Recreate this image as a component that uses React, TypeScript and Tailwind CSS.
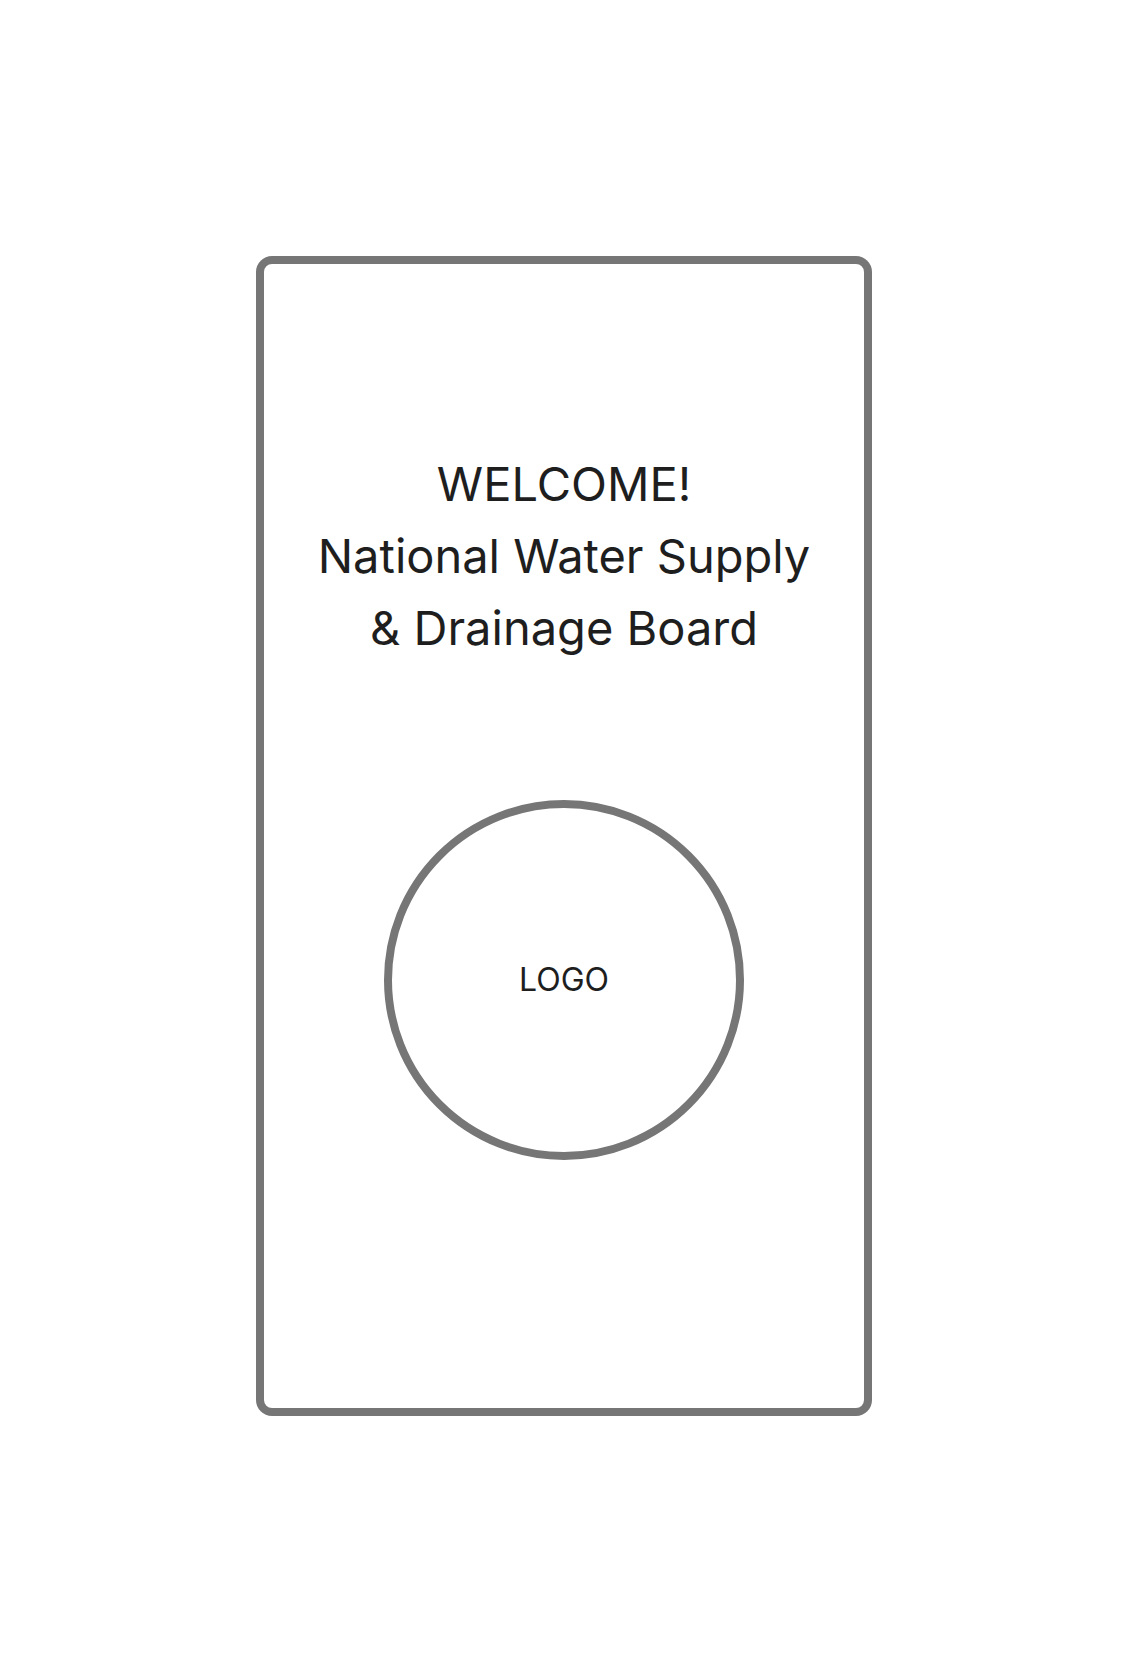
export default function App() {
  return (
    <div className="min-h-screen w-full bg-white flex items-center justify-center" style={{ fontFamily: 'Inter, "Noto Sans", sans-serif' }}>
      <div className="w-[616px] h-[1160px] border-8 border-[#767676] rounded-[16px] flex flex-col items-center pt-[184px]">
        <h1 className="text-center text-[47px] leading-[72px] font-normal text-[#1e1e1e]">
          WELCOME!
          <br />
          National Water Supply
          <br />
          &amp; Drainage Board
        </h1>
        <div className="mt-[136px] w-[360px] h-[360px] rounded-full border-8 border-[#767676] flex items-center justify-center">
          <span className="text-[32px] text-[#1e1e1e]">LOGO</span>
        </div>
      </div>
    </div>
  )
}
